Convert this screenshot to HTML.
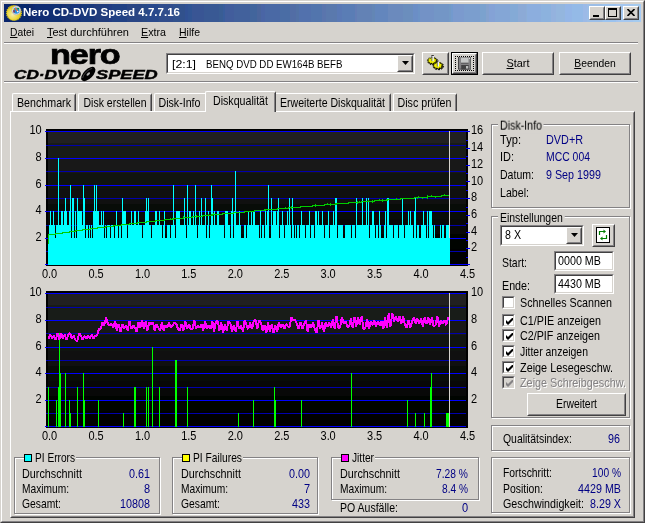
<!DOCTYPE html>
<html><head><meta charset="utf-8"><title>Nero CD-DVD Speed 4.7.7.16</title>
<style>
html,body{margin:0;padding:0;}
body{width:645px;height:523px;overflow:hidden;background:#d6d3ce;position:relative;
 font-family:"Liberation Sans",sans-serif;font-size:11px;color:#000;}
#root{position:absolute;left:0;top:0;width:645px;height:523px;will-change:transform;}
.a{position:absolute;}
.t{position:absolute;white-space:nowrap;line-height:13px;height:13px;}
.nv{color:#000084;}
.win{left:0;top:0;width:645px;height:523px;box-sizing:border-box;
 border:1px solid;border-color:#d6d3ce #424142 #424142 #d6d3ce;}
.win2{left:1px;top:1px;width:643px;height:521px;box-sizing:border-box;
 border:1px solid;border-color:#fff #848284 #848284 #fff;}
.title{left:4px;top:4px;width:637px;height:18px;background:linear-gradient(to right,#0a246a,#a6caf0);}
.btn{box-sizing:border-box;background:#d6d3ce;border:1px solid;border-color:#fff #424142 #424142 #fff;}
.btn:after{content:"";position:absolute;left:0;top:0;right:0;bottom:0;border:1px solid;border-color:#d6d3ce #848284 #848284 #d6d3ce;}
.sunk{box-sizing:border-box;background:#fff;border:1px solid;border-color:#848284 #fff #fff #848284;}
.sunk:after{content:"";position:absolute;left:0;top:0;right:0;bottom:0;border:1px solid;border-color:#424142 #d6d3ce #d6d3ce #424142;}
.sep{height:2px;border-top:1px solid #848284;border-bottom:1px solid #fff;box-sizing:border-box;}
.grp{box-sizing:border-box;border:1px solid #848284;box-shadow:1px 1px 0 #fff, inset 1px 1px 0 #fff;}
.gl{background:#d6d3ce;padding:0 2px;}
.tab{box-sizing:border-box;border-top:1px solid #fff;border-left:1px solid #fff;border-right:1px solid #424142;border-radius:2px 2px 0 0;background:#d6d3ce;}
.tab:after{content:"";position:absolute;right:0;top:1px;bottom:0;width:1px;background:#848284;}
u{text-decoration:underline;}
.cb{width:13px;height:13px;}
.sw{display:inline-block;width:7px;height:7px;border:1px solid #000;margin-right:4px;vertical-align:-1px;}
</style></head>
<body>
<div id="root">
<div class="a win"></div><div class="a win2"></div>
<svg class="a" style="left:4px;top:4px" width="637" height="18" shape-rendering="crispEdges"><rect x="0" y="0" width="16" height="18" fill="#08246b"/><rect x="16" y="0" width="9" height="18" fill="#08286b"/><rect x="25" y="0" width="4" height="18" fill="#10286b"/><rect x="29" y="0" width="2" height="18" fill="#102873"/><rect x="31" y="0" width="15" height="18" fill="#102c73"/><rect x="46" y="0" width="12" height="18" fill="#103073"/><rect x="58" y="0" width="4" height="18" fill="#183073"/><rect x="62" y="0" width="5" height="18" fill="#183473"/><rect x="67" y="0" width="10" height="18" fill="#18347b"/><rect x="77" y="0" width="13" height="18" fill="#18387b"/><rect x="90" y="0" width="2" height="18" fill="#21387b"/><rect x="92" y="0" width="13" height="18" fill="#213c7b"/><rect x="105" y="0" width="3" height="18" fill="#213c84"/><rect x="108" y="0" width="15" height="18" fill="#214184"/><rect x="123" y="0" width="15" height="18" fill="#294584"/><rect x="138" y="0" width="5" height="18" fill="#294984"/><rect x="143" y="0" width="11" height="18" fill="#29498c"/><rect x="154" y="0" width="1" height="18" fill="#294d8c"/><rect x="155" y="0" width="14" height="18" fill="#314d8c"/><rect x="169" y="0" width="12" height="18" fill="#31518c"/><rect x="181" y="0" width="3" height="18" fill="#315194"/><rect x="184" y="0" width="4" height="18" fill="#315594"/><rect x="188" y="0" width="12" height="18" fill="#395594"/><rect x="200" y="0" width="15" height="18" fill="#395994"/><rect x="215" y="0" width="4" height="18" fill="#395d94"/><rect x="219" y="0" width="2" height="18" fill="#395d9c"/><rect x="221" y="0" width="9" height="18" fill="#425d9c"/><rect x="230" y="0" width="16" height="18" fill="#42619c"/><rect x="246" y="0" width="7" height="18" fill="#42659c"/><rect x="253" y="0" width="4" height="18" fill="#4a659c"/><rect x="257" y="0" width="4" height="18" fill="#4a65a5"/><rect x="261" y="0" width="15" height="18" fill="#4a69a5"/><rect x="276" y="0" width="10" height="18" fill="#4a6da5"/><rect x="286" y="0" width="6" height="18" fill="#526da5"/><rect x="292" y="0" width="3" height="18" fill="#5271a5"/><rect x="295" y="0" width="12" height="18" fill="#5271ad"/><rect x="307" y="0" width="11" height="18" fill="#5275ad"/><rect x="318" y="0" width="4" height="18" fill="#5a75ad"/><rect x="322" y="0" width="11" height="18" fill="#5a79ad"/><rect x="333" y="0" width="5" height="18" fill="#5a79b5"/><rect x="338" y="0" width="13" height="18" fill="#5a7db5"/><rect x="351" y="0" width="2" height="18" fill="#637db5"/><rect x="353" y="0" width="15" height="18" fill="#6382b5"/><rect x="368" y="0" width="3" height="18" fill="#6386b5"/><rect x="371" y="0" width="13" height="18" fill="#6386bd"/><rect x="384" y="0" width="15" height="18" fill="#6b8abd"/><rect x="399" y="0" width="10" height="18" fill="#6b8ebd"/><rect x="409" y="0" width="5" height="18" fill="#6b8ec6"/><rect x="414" y="0" width="2" height="18" fill="#6b92c6"/><rect x="416" y="0" width="14" height="18" fill="#7392c6"/><rect x="430" y="0" width="15" height="18" fill="#7396c6"/><rect x="445" y="0" width="2" height="18" fill="#739ac6"/><rect x="447" y="0" width="2" height="18" fill="#739ace"/><rect x="449" y="0" width="11" height="18" fill="#7b9ace"/><rect x="460" y="0" width="16" height="18" fill="#7b9ece"/><rect x="476" y="0" width="6" height="18" fill="#7ba2ce"/><rect x="482" y="0" width="3" height="18" fill="#84a2ce"/><rect x="485" y="0" width="6" height="18" fill="#84a2d6"/><rect x="491" y="0" width="15" height="18" fill="#84a6d6"/><rect x="506" y="0" width="8" height="18" fill="#84aad6"/><rect x="514" y="0" width="8" height="18" fill="#8caad6"/><rect x="522" y="0" width="1" height="18" fill="#8caed6"/><rect x="523" y="0" width="14" height="18" fill="#8caede"/><rect x="537" y="0" width="10" height="18" fill="#8cb2de"/><rect x="547" y="0" width="5" height="18" fill="#94b2de"/><rect x="552" y="0" width="9" height="18" fill="#94b6de"/><rect x="561" y="0" width="7" height="18" fill="#94b6e7"/><rect x="568" y="0" width="11" height="18" fill="#94bae7"/><rect x="579" y="0" width="4" height="18" fill="#9cbae7"/><rect x="583" y="0" width="15" height="18" fill="#9cbee7"/><rect x="598" y="0" width="1" height="18" fill="#9cc3e7"/><rect x="599" y="0" width="13" height="18" fill="#9cc3ef"/><rect x="612" y="0" width="2" height="18" fill="#a5c3ef"/><rect x="614" y="0" width="15" height="18" fill="#a5c7ef"/><rect x="629" y="0" width="7" height="18" fill="#a5cbef"/><rect x="636" y="0" width="1" height="18" fill="#a5cbf7"/></svg>
<div class="t" id="ttl" style="left:23px;top:6px;transform:scale(1.048,1);transform-origin:0 10.3px;color:#fff;font-weight:bold;">Nero CD-DVD Speed 4.7.7.16</div>
<svg class="a" style="left:5px;top:4px" width="18" height="18" viewBox="5 4 18 18">
<defs><radialGradient id="gd" cx="0.4" cy="0.6" r="0.6"><stop offset="0" stop-color="#f4ecb0"/><stop offset="0.6" stop-color="#ecd840"/><stop offset="1" stop-color="#d8c010"/></radialGradient></defs>
<circle cx="14" cy="13" r="7.4" fill="url(#gd)" stroke="#d8c418" stroke-width="1.2" stroke-dasharray="1.2 0.8"/>
<circle cx="16.3" cy="10.4" r="4.4" fill="#e4e4ec" stroke="#a8a8b8" stroke-width="0.6"/>
<circle cx="16.3" cy="10.6" r="3.2" fill="#2090e0"/>
<path d="M13.4 10.2v2.2h1.2v-2.2z" fill="#c01010"/><path d="M17.3 7.9h1.8v1.4h-1.8z" fill="#209020"/><circle cx="13.5" cy="9.4" r="0.6" fill="#f8e000"/>
<path d="M15.1 7.8L17.8 11.6" stroke="#f07030" stroke-width="1.3"/><circle cx="17.8" cy="11.6" r="0.8" fill="#fff"/></svg>
<div class="a btn" style="left:589px;top:6px;width:16px;height:14px;"><div class="a" style="left:3px;top:8px;width:6px;height:2px;background:#000"></div></div><div class="a btn" style="left:605px;top:6px;width:16px;height:14px;"><div class="a" style="left:2px;top:1px;width:9px;height:9px;box-sizing:border-box;border:1px solid #000;border-top-width:2px"></div></div><div class="a btn" style="left:623px;top:6px;width:16px;height:14px;"><svg class="a" style="left:3px;top:2px" width="8" height="7" viewBox="0 0 8 7"><path d="M0.5 0 L7.5 7 M7.5 0 L0.5 7" stroke="#000" stroke-width="1.6" fill="none"/></svg></div>
<div class="t" style="left:10px;top:26px;transform:scale(0.934,1);transform-origin:0 10.3px;"><u>D</u>atei</div>
<div class="t" style="left:47px;top:26px;transform:scale(1.000,1);transform-origin:0 10.3px;"><u>T</u>est durchführen</div>
<div class="t" style="left:141px;top:26px;transform:scale(0.973,1);transform-origin:0 10.3px;"><u>E</u>xtra</div>
<div class="t" style="left:179px;top:26px;transform:scale(0.955,1);transform-origin:0 10.3px;"><u>H</u>ilfe</div>
<div class="a sep" style="left:4px;top:42px;width:634px;"></div>
<div class="a sep" style="left:4px;top:81px;width:634px;"></div>
<div class="t" id="lg1" style="left:50px;top:38.7px;font-size:30px;line-height:30px;height:30px;font-weight:bold;letter-spacing:-1px;-webkit-text-stroke:0.8px #000;transform-origin:0 25px;transform:scale(1.14,0.93);">nero</div>
<div class="t" id="lg2" style="left:13.5px;top:66px;font-size:14px;line-height:16px;height:16px;font-weight:bold;font-style:italic;-webkit-text-stroke:0.5px #000;transform-origin:0 12px;transform:scale(1.23,0.96);">CD·DVD</div>
<div class="t" id="lg3" style="left:96px;top:66px;font-size:14px;line-height:16px;height:16px;font-weight:bold;font-style:italic;-webkit-text-stroke:0.5px #000;transform-origin:0 12px;transform:scale(1.3,0.96);">SPEED</div>
<svg class="a" style="left:78px;top:64px" width="20" height="20" viewBox="78 64 20 20"><g transform="rotate(-45 88.3 74)"><ellipse cx="88.3" cy="74" rx="9" ry="4.6" fill="#000"/><ellipse cx="88.3" cy="74" rx="2.2" ry="1.1" fill="#b0b0b0"/><path d="M81.5 72.8 A7.5 3 0 0 1 95 72.8" stroke="#555" stroke-width="0.7" fill="none"/></g></svg>
<div class="a sunk" style="left:166px;top:53px;width:249px;height:21px;"></div>
<div class="t" id="cbt" style="left:172px;top:57.6px;transform:scale(1.120,1);transform-origin:0 10.3px;">[2:1]</div>
<div class="t" style="left:206px;top:57.6px;transform:scale(0.882,1);transform-origin:0 10.3px;">BENQ DVD DD EW164B BEFB</div>
<div class="a btn" style="left:397px;top:55px;width:16px;height:17px;"><svg class="a" style="left:4px;top:5px" width="7" height="4"><path d="M0 0H7L3.5 4Z" fill="#000"/></svg></div>
<div class="a btn" style="left:422px;top:52px;width:27px;height:23px;"></div>
<svg class="a" style="left:424px;top:53px" width="24" height="21" viewBox="424 53 24 21">
<path d="M436.6 61.3L437.8 61.6L437.6 62.3L436.3 62.3L435.9 62.9L436.6 63.6L435.9 64.1L434.8 63.5L434.0 63.8L433.9 64.7L433.0 64.8L432.6 64.0L431.6 63.8L430.8 64.5L430.0 64.2L430.4 63.3L429.7 62.9L428.5 63.1L428.1 62.5L429.1 62.0L429.0 61.3L427.8 61.0L428.0 60.3L429.3 60.3L429.7 59.7L429.0 59.0L429.7 58.5L430.8 59.1L431.6 58.8L431.7 57.9L432.6 57.8L433.0 58.6L434.0 58.8L434.8 58.1L435.6 58.4L435.2 59.3L435.9 59.7L437.1 59.5L437.5 60.1L436.5 60.6ZM442.3 66.2L443.6 66.5L443.4 67.2L442.0 67.2L441.6 67.8L442.3 68.6L441.6 69.1L440.5 68.5L439.6 68.8L439.5 69.8L438.6 69.8L438.2 68.9L437.2 68.8L436.3 69.5L435.5 69.2L435.9 68.3L435.2 67.8L433.9 68.1L433.5 67.4L434.6 66.9L434.5 66.2L433.2 65.9L433.4 65.2L434.8 65.2L435.2 64.6L434.5 63.8L435.2 63.3L436.3 63.9L437.2 63.6L437.3 62.6L438.2 62.6L438.6 63.5L439.6 63.6L440.5 62.9L441.3 63.2L440.9 64.1L441.6 64.6L442.9 64.3L443.3 65.0L442.2 65.5Z" fill="#000" stroke="#000" stroke-width="0.8"/><path d="M436.0 60.6L437.2 60.9L437.0 61.6L435.7 61.6L435.3 62.2L436.0 62.9L435.3 63.4L434.2 62.8L433.4 63.1L433.3 64.0L432.4 64.1L432.0 63.3L431.0 63.1L430.2 63.8L429.4 63.5L429.8 62.6L429.1 62.2L427.9 62.4L427.5 61.8L428.5 61.3L428.4 60.6L427.2 60.3L427.4 59.6L428.7 59.6L429.1 59.0L428.4 58.3L429.1 57.8L430.2 58.4L431.0 58.1L431.1 57.2L432.0 57.1L432.4 57.9L433.4 58.1L434.2 57.4L435.0 57.7L434.6 58.6L435.3 59.0L436.5 58.8L436.9 59.4L435.9 59.9ZM441.7 65.5L443.0 65.8L442.8 66.5L441.4 66.5L441.0 67.1L441.7 67.9L441.0 68.4L439.9 67.8L439.0 68.1L438.9 69.1L438.0 69.1L437.6 68.2L436.6 68.1L435.7 68.8L434.9 68.5L435.3 67.6L434.6 67.1L433.3 67.4L432.9 66.7L434.0 66.2L433.9 65.5L432.6 65.2L432.8 64.5L434.2 64.5L434.6 63.9L433.9 63.1L434.6 62.6L435.7 63.2L436.6 62.9L436.7 61.9L437.6 61.9L438.0 62.8L439.0 62.9L439.9 62.2L440.7 62.5L440.3 63.4L441.0 63.9L442.3 63.6L442.7 64.3L441.6 64.8Z" fill="#f0f000" stroke="#000" stroke-width="0.5" stroke-linejoin="round"/>
<path d="M431.4 55.2h2.4v0.8h-2.4zM436.8 60.8h2.2v0.8h-2.2z" fill="#000"/>
<path d="M431.4 56h1.1v5.2h-1.1zM436.8 61.6h1v4.8h-1z" fill="#636563"/><path d="M432.5 56h1.3v5.2h-1.3zM437.8 61.6h1.2v4.8h-1.2z" fill="#f0f0ff"/></svg>
<div class="a" style="left:451px;top:52px;width:27px;height:23px;background:#000"></div><div class="a btn" style="left:452px;top:53px;width:25px;height:21px;"></div>
<div class="a" style="left:455px;top:56px;width:19px;height:15px;box-sizing:border-box;border:1px dotted #000"></div>
<svg class="a" style="left:458px;top:57px" width="13" height="13" viewBox="0 0 13 13"><rect x="0" y="0" width="13" height="12.5" fill="#848284"/><rect x="0" y="0" width="1" height="12.5" fill="#424142"/><rect x="1" y="11.7" width="12" height="0.8" fill="#424142"/><rect x="3" y="0.8" width="7.5" height="5" fill="#c6c7c6"/><rect x="3" y="5.8" width="7.5" height="0.7" fill="#424142"/><rect x="3.2" y="8" width="7.5" height="4.5" fill="#424142"/><rect x="8" y="9" width="2.2" height="2.6" fill="#bdbebd"/><rect x="11.2" y="1" width="1" height="1" fill="#f0f0f0"/><rect x="12" y="0" width="1" height="12.5" fill="#636563"/></svg>
<div class="a btn" style="left:482px;top:52px;width:72px;height:23px;"></div><div class="t" style="left:482px;top:57px;width:72px;text-align:center;transform:scale(0.989,1);transform-origin:50% 10.3px;"><u>S</u>tart</div>
<div class="a btn" style="left:559px;top:52px;width:72px;height:23px;"></div><div class="t" style="left:559px;top:57px;width:72px;text-align:center;transform:scale(0.941,1);transform-origin:50% 10.3px;"><u>B</u>eenden</div>
<div class="a" style="left:10px;top:111px;width:625px;height:407px;box-sizing:border-box;border:1px solid;border-color:#fff #424142 #424142 #fff;"></div>
<div class="a" style="left:11px;top:112px;width:623px;height:405px;box-sizing:border-box;border:1px solid;border-color:#d6d3ce #848284 #848284 #d6d3ce;"></div>
<div class="a tab" style="left:12px;top:93px;width:64px;height:18px;"></div>
<div class="t" style="left:12px;top:97px;width:64px;text-align:center;transform:scale(0.970,1.13);transform-origin:50% 10.3px;">Benchmark</div>
<div class="a tab" style="left:78px;top:93px;width:74px;height:18px;"></div>
<div class="t" style="left:78px;top:97px;width:74px;text-align:center;transform:scale(0.954,1.13);transform-origin:50% 10.3px;">Disk erstellen</div>
<div class="a tab" style="left:154px;top:93px;width:54px;height:18px;"></div>
<div class="t" style="left:154px;top:97px;width:51px;text-align:center;transform:scale(0.968,1.13);transform-origin:50% 10.3px;">Disk-Info</div>
<div class="a tab" style="left:274px;top:93px;width:117px;height:18px;"></div>
<div class="t" style="left:276px;top:97px;width:113px;text-align:center;transform:scale(0.959,1.13);transform-origin:50% 10.3px;">Erweiterte Diskqualität</div>
<div class="a tab" style="left:393px;top:93px;width:64px;height:18px;"></div>
<div class="t" style="left:393px;top:97px;width:63px;text-align:center;transform:scale(0.970,1.13);transform-origin:50% 10.3px;">Disc prüfen</div>
<div class="a tab" style="left:205px;top:91px;width:71px;height:21px;"></div>
<div class="t" style="left:205px;top:95px;width:71px;text-align:center;transform:scale(0.967,1.13);transform-origin:50% 10.3px;">Diskqualität</div>
<svg class="a" style="left:0;top:0" width="645" height="523" viewBox="0 0 645 523" font-family="Liberation Sans, sans-serif" font-size="11" shape-rendering="crispEdges"><defs><linearGradient id="cg" x1="0" y1="0" x2="0" y2="1"><stop offset="0" stop-color="#242524"/><stop offset="0.5" stop-color="#121412"/><stop offset="1" stop-color="#000"/></linearGradient></defs><rect x="46" y="129" width="422" height="137" fill="#000"/><rect x="48" y="131" width="418" height="12" fill="#212021"/><rect x="48" y="143" width="418" height="15" fill="#181c18"/><rect x="48" y="158" width="418" height="15" fill="#181818"/><rect x="48" y="173" width="418" height="16" fill="#101410"/><rect x="48" y="189" width="418" height="15" fill="#101010"/><rect x="48" y="204" width="418" height="15" fill="#080c08"/><rect x="48" y="219" width="418" height="15" fill="#080808"/><rect x="48" y="234" width="418" height="15" fill="#000400"/><rect x="48" y="249" width="418" height="15" fill="#000000"/><rect x="46" y="291" width="422" height="137" fill="#000"/><rect x="48" y="293" width="418" height="12" fill="#212021"/><rect x="48" y="305" width="418" height="15" fill="#181c18"/><rect x="48" y="320" width="418" height="15" fill="#181818"/><rect x="48" y="335" width="418" height="16" fill="#101410"/><rect x="48" y="351" width="418" height="15" fill="#101010"/><rect x="48" y="366" width="418" height="15" fill="#080c08"/><rect x="48" y="381" width="418" height="15" fill="#080808"/><rect x="48" y="396" width="418" height="15" fill="#000400"/><rect x="48" y="411" width="418" height="15" fill="#000000"/><rect x="45" y="264" width="421" height="1" fill="#0000ff"/><rect x="46" y="251" width="420" height="1" fill="#0000ad"/><rect x="45" y="238" width="421" height="1" fill="#0000ff"/><rect x="46" y="225" width="420" height="1" fill="#0000ad"/><rect x="45" y="211" width="421" height="1" fill="#0000ff"/><rect x="46" y="198" width="420" height="1" fill="#0000ad"/><rect x="45" y="185" width="421" height="1" fill="#0000ff"/><rect x="46" y="171" width="420" height="1" fill="#0000ad"/><rect x="45" y="158" width="421" height="1" fill="#0000ff"/><rect x="46" y="145" width="420" height="1" fill="#0000ad"/><rect x="45" y="131" width="421" height="1" fill="#0000ff"/><rect x="45" y="426" width="421" height="1" fill="#0000ff"/><rect x="46" y="413" width="420" height="1" fill="#0000ad"/><rect x="45" y="400" width="421" height="1" fill="#0000ff"/><rect x="46" y="387" width="420" height="1" fill="#0000ad"/><rect x="45" y="373" width="421" height="1" fill="#0000ff"/><rect x="46" y="360" width="420" height="1" fill="#0000ad"/><rect x="45" y="347" width="421" height="1" fill="#0000ff"/><rect x="46" y="333" width="420" height="1" fill="#0000ad"/><rect x="45" y="320" width="421" height="1" fill="#0000ff"/><rect x="46" y="307" width="420" height="1" fill="#0000ad"/><rect x="45" y="293" width="421" height="1" fill="#0000ff"/><path d="M48 265V238H49V265ZM49 265V225H50V265ZM50 265V211H51V265ZM51 265V225H53V265ZM53 265V211H54V265ZM54 265V225H55V265ZM55 265V238H56V265ZM56 265V225H58V265ZM58 265V158H59V265ZM59 265V225H61V265ZM61 265V211H63V265ZM63 265V225H64V265ZM64 265V211H65V265ZM65 265V198H66V265ZM66 265V211H67V265ZM67 265V225H69V265ZM69 265V211H70V265ZM70 265V185H71V265ZM71 265V238H72V265ZM72 265V198H74V265ZM74 265V238H75V265ZM75 265V211H76V265ZM76 265V238H77V265ZM77 265V198H78V265ZM78 265V211H82V265ZM82 265V225H83V265ZM83 265V185H84V265ZM84 265V198H85V265ZM85 265V238H86V265ZM86 265V225H88V265ZM88 265V238H89V265ZM89 265V225H90V265ZM90 265V238H91V265ZM91 265V225H92V265ZM92 265V238H93V265ZM93 265V211H94V265ZM94 265V185H95V265ZM95 265V211H96V265ZM96 265V185H97V265ZM97 265V211H99V265ZM99 265V225H101V265ZM101 265V211H102V265ZM102 265V225H103V265ZM103 265V211H104V265ZM104 265V238H105V265ZM105 265V225H106V265ZM106 265V238H107V265ZM107 265V225H110V265ZM110 265V238H111V265ZM111 265V225H114V265ZM114 265V238H115V265ZM115 265V225H116V265ZM116 265V211H117V265ZM117 265V225H118V265ZM118 265V238H119V265ZM119 265V225H121V265ZM121 265V238H122V265ZM122 265V198H123V265ZM123 265V211H126V265ZM126 265V225H127V265ZM127 265V238H128V265ZM128 265V225H131V265ZM131 265V211H132V265ZM132 265V225H134V265ZM134 265V211H136V265ZM136 265V225H138V265ZM138 265V211H139V265ZM139 265V225H142V265ZM142 265V238H143V265ZM143 265V225H145V265ZM145 265V211H146V265ZM146 265V198H147V265ZM147 265V211H148V265ZM148 265V198H149V265ZM149 265V225H151V265ZM151 265V238H152V265ZM152 265V225H155V265ZM155 265V211H157V265ZM157 265V225H159V265ZM159 265V211H160V265ZM160 265V225H162V265ZM162 265V238H163V265ZM163 265V225H164V265ZM164 265V211H165V265ZM165 265V238H167V265ZM167 265V225H170V265ZM170 265V238H171V265ZM171 265V225H173V265ZM173 265V185H174V265ZM174 265V225H175V265ZM175 265V238H176V265ZM176 265V211H180V265ZM180 265V225H184V265ZM184 265V198H185V265ZM185 265V225H186V265ZM186 265V238H187V265ZM187 265V185H188V265ZM188 265V225H189V265ZM189 265V211H191V265ZM191 265V225H193V265ZM193 265V211H194V265ZM194 265V225H195V265ZM195 265V185H196V265ZM196 265V225H197V265ZM197 265V238H198V265ZM198 265V225H199V265ZM199 265V211H200V265ZM200 265V225H201V265ZM201 265V198H202V265ZM202 265V225H205V265ZM205 265V198H206V265ZM206 265V238H207V265ZM207 265V225H208V265ZM208 265V211H209V265ZM209 265V238H210V265ZM210 265V225H211V265ZM211 265V185H212V265ZM212 265V198H213V265ZM213 265V225H214V265ZM214 265V211H215V265ZM215 265V225H217V265ZM217 265V211H219V265ZM219 265V225H224V265ZM224 265V238H225V265ZM225 265V211H228V265ZM228 265V225H230V265ZM230 265V238H231V265ZM231 265V211H232V265ZM232 265V198H233V265ZM233 265V238H234V265ZM234 265V211H235V265ZM235 265V171H236V265ZM236 265V225H239V265ZM239 265V211H240V265ZM240 265V225H241V265ZM241 265V238H244V265ZM244 265V225H246V265ZM246 265V238H247V265ZM247 265V225H248V265ZM248 265V211H249V265ZM249 265V225H251V265ZM251 265V211H252V265ZM252 265V225H253V265ZM253 265V211H255V265ZM255 265V225H259V265ZM259 265V238H260V265ZM260 265V211H261V265ZM261 265V238H262V265ZM262 265V225H264V265ZM264 265V238H265V265ZM265 265V211H266V265ZM266 265V225H267V265ZM267 265V211H268V265ZM268 265V185H269V265ZM269 265V238H271V265ZM271 265V198H272V265ZM272 265V225H273V265ZM273 265V211H276V265ZM276 265V225H277V265ZM277 265V211H278V265ZM278 265V198H279V265ZM279 265V238H280V265ZM280 265V225H282V265ZM282 265V211H283V265ZM283 265V225H284V265ZM284 265V238H285V265ZM285 265V225H287V265ZM287 265V211H288V265ZM288 265V225H289V265ZM289 265V198H290V265ZM290 265V225H291V265ZM291 265V238H292V265ZM292 265V198H293V265ZM293 265V225H294V265ZM294 265V238H295V265ZM295 265V225H296V265ZM296 265V238H297V265ZM297 265V225H299V265ZM299 265V238H300V265ZM300 265V225H301V265ZM301 265V211H302V265ZM302 265V225H305V265ZM305 265V238H306V265ZM306 265V225H309V265ZM309 265V211H310V265ZM310 265V238H311V265ZM311 265V225H314V265ZM314 265V238H315V265ZM315 265V211H317V265ZM317 265V225H318V265ZM318 265V211H319V265ZM319 265V225H322V265ZM322 265V211H323V265ZM323 265V225H324V265ZM324 265V238H325V265ZM325 265V225H328V265ZM328 265V211H329V265ZM329 265V238H330V265ZM330 265V225H333V265ZM333 265V211H334V265ZM334 265V225H335V265ZM335 265V198H337V265ZM337 265V238H338V265ZM338 265V225H343V265ZM343 265V238H345V265ZM345 265V225H351V265ZM351 265V238H352V265ZM352 265V225H355V265ZM355 265V238H356V265ZM356 265V198H357V265ZM357 265V225H362V265ZM362 265V198H363V265ZM363 265V225H366V265ZM366 265V198H367V265ZM367 265V225H368V265ZM368 265V198H369V265ZM369 265V238H370V265ZM370 265V225H372V265ZM372 265V211H374V265ZM374 265V225H375V265ZM375 265V238H376V265ZM376 265V225H378V265ZM378 265V238H379V265ZM379 265V211H380V265ZM380 265V225H381V265ZM381 265V238H384V265ZM384 265V225H385V265ZM385 265V211H386V265ZM386 265V238H387V265ZM387 265V198H389V265ZM389 265V225H393V265ZM393 265V238H394V265ZM394 265V225H398V265ZM398 265V238H399V265ZM399 265V225H402V265ZM402 265V198H403V265ZM403 265V225H404V265ZM404 265V238H405V265ZM405 265V225H408V265ZM408 265V211H409V265ZM409 265V225H410V265ZM410 265V211H411V265ZM411 265V225H413V265ZM413 265V238H414V265ZM414 265V211H415V265ZM415 265V198H416V265ZM416 265V238H417V265ZM417 265V225H419V265ZM419 265V238H421V265ZM421 265V225H423V265ZM423 265V211H424V265ZM424 265V225H426V265ZM426 265V238H427V265ZM427 265V211H428V265ZM428 265V238H429V265ZM429 265V211H432V265ZM432 265V225H433V265ZM433 265V238H434V265ZM434 265V225H435V265ZM435 265V238H440V265ZM440 265V225H441V265ZM441 265V238H442V265ZM442 265V225H444V265ZM444 265V238H446V265ZM446 265V225H450V265Z" fill="#00ffff"/><rect x="466" y="264" width="4" height="1" fill="#0000ff"/><rect x="466" y="257" width="2" height="1" fill="#0000ff"/><rect x="466" y="248" width="4" height="1" fill="#0000ff"/><rect x="466" y="240" width="2" height="1" fill="#0000ff"/><rect x="466" y="232" width="4" height="1" fill="#0000ff"/><rect x="466" y="223" width="2" height="1" fill="#0000ff"/><rect x="466" y="215" width="4" height="1" fill="#0000ff"/><rect x="466" y="207" width="2" height="1" fill="#0000ff"/><rect x="466" y="198" width="4" height="1" fill="#0000ff"/><rect x="466" y="190" width="2" height="1" fill="#0000ff"/><rect x="466" y="181" width="4" height="1" fill="#0000ff"/><rect x="466" y="173" width="2" height="1" fill="#0000ff"/><rect x="466" y="165" width="4" height="1" fill="#0000ff"/><rect x="466" y="156" width="2" height="1" fill="#0000ff"/><rect x="466" y="148" width="4" height="1" fill="#0000ff"/><rect x="466" y="140" width="2" height="1" fill="#0000ff"/><rect x="466" y="131" width="4" height="1" fill="#0000ff"/><path d="M48 234h1v10h-1zM49 234h1V235h-1zM50 234h1V235h-1zM51 234h1V235h-1zM52 234h1V235h-1zM53 234h1V235h-1zM54 234h1V235h-1zM55 233h1V235h-1zM56 233h1V234h-1zM57 233h1V234h-1zM58 233h1V234h-1zM59 233h1V234h-1zM60 233h1V234h-1zM61 233h1V234h-1zM62 232h1V234h-1zM63 232h1V233h-1zM64 232h1V233h-1zM65 232h1V233h-1zM66 232h1V233h-1zM67 232h1V233h-1zM68 232h1V233h-1zM69 231h1V233h-1zM70 231h1V232h-1zM71 231h1V232h-1zM72 231h1V232h-1zM73 231h1V232h-1zM74 231h1V232h-1zM75 230h1V232h-1zM76 230h1V231h-1zM77 230h1V231h-1zM78 230h1V231h-1zM79 230h1V231h-1zM80 230h1V231h-1zM81 230h1V231h-1zM82 229h1V231h-1zM83 229h1V230h-1zM84 229h1V230h-1zM85 229h1V230h-1zM86 229h1V230h-1zM87 229h1V230h-1zM88 229h1V230h-1zM89 229h1V230h-1zM90 228h1V230h-1zM91 228h1V229h-1zM92 228h1V229h-1zM93 228h1V229h-1zM94 228h1V229h-1zM95 228h1V229h-1zM96 228h1V229h-1zM97 227h1V229h-1zM98 227h1V228h-1zM99 227h1V228h-1zM100 227h1V228h-1zM101 227h1V228h-1zM102 227h1V228h-1zM103 227h1V228h-1zM104 227h1V228h-1zM105 226h1V228h-1zM106 226h1V227h-1zM107 226h1V227h-1zM108 226h1V227h-1zM109 226h1V227h-1zM110 226h1V227h-1zM111 226h1V227h-1zM112 226h1V227h-1zM113 225h1V227h-1zM114 225h1V226h-1zM115 225h1V226h-1zM116 225h1V226h-1zM117 225h1V226h-1zM118 225h1V226h-1zM119 225h1V226h-1zM120 225h1V226h-1zM121 224h1V226h-1zM122 224h1V225h-1zM123 224h1V225h-1zM124 224h1V225h-1zM125 224h1V225h-1zM126 224h1V225h-1zM127 224h1V225h-1zM128 224h1V225h-1zM129 223h1V225h-1zM130 223h1V224h-1zM131 223h1V224h-1zM132 223h1V224h-1zM133 223h1V224h-1zM134 223h1V224h-1zM135 223h1V224h-1zM136 223h1V224h-1zM137 222h1V224h-1zM138 222h1V223h-1zM139 222h1V223h-1zM140 222h1V223h-1zM141 222h1V223h-1zM142 222h1V223h-1zM143 222h1V223h-1zM144 222h1V223h-1zM145 222h1V223h-1zM146 221h1V223h-1zM147 221h1V222h-1zM148 221h1V222h-1zM149 221h1V222h-1zM150 221h1V222h-1zM151 221h1V222h-1zM152 221h1V222h-1zM153 221h1V222h-1zM154 221h1V222h-1zM155 220h1V222h-1zM156 220h1V221h-1zM157 220h1V221h-1zM158 220h1V221h-1zM159 220h1V221h-1zM160 220h1V221h-1zM161 220h1V221h-1zM162 220h1V221h-1zM163 220h1V221h-1zM164 219h1V221h-1zM165 219h1V220h-1zM166 219h1V220h-1zM167 219h1V220h-1zM168 219h1V220h-1zM169 219h1V220h-1zM170 218h1V220h-1zM171 219h1V220h-1zM172 218h1V220h-1zM173 218h1V220h-1zM174 218h1V219h-1zM175 218h1V219h-1zM176 218h1V219h-1zM177 218h1V219h-1zM178 218h1V219h-1zM179 218h1V219h-1zM180 218h1V219h-1zM181 218h1V219h-1zM182 218h1V219h-1zM183 216h1V219h-1zM184 217h1V218h-1zM185 217h1V218h-1zM186 217h1V218h-1zM187 217h1V218h-1zM188 217h1V218h-1zM189 217h1V218h-1zM190 217h1V218h-1zM191 217h1V218h-1zM192 216h1V218h-1zM193 216h1V217h-1zM194 216h1V217h-1zM195 216h1V217h-1zM196 215h1V218h-1zM197 216h1V217h-1zM198 216h1V217h-1zM199 216h1V217h-1zM200 216h1V217h-1zM201 216h1V217h-1zM202 215h1V217h-1zM203 215h1V216h-1zM204 215h1V216h-1zM205 215h1V216h-1zM206 215h1V216h-1zM207 215h1V216h-1zM208 214h1V216h-1zM209 215h1V216h-1zM210 215h1V216h-1zM211 214h1V216h-1zM212 214h1V216h-1zM213 213h1V215h-1zM214 214h1V215h-1zM215 214h1V215h-1zM216 214h1V215h-1zM217 214h1V215h-1zM218 214h1V215h-1zM219 214h1V215h-1zM220 214h1V215h-1zM221 214h1V215h-1zM222 213h1V215h-1zM223 213h1V214h-1zM224 213h1V214h-1zM225 213h1V214h-1zM226 213h1V214h-1zM227 213h1V214h-1zM228 213h1V214h-1zM229 213h1V214h-1zM230 213h1V214h-1zM231 213h1V214h-1zM232 213h1V214h-1zM233 212h1V214h-1zM234 212h1V213h-1zM235 212h1V213h-1zM236 212h1V213h-1zM237 212h1V213h-1zM238 212h1V213h-1zM239 212h1V213h-1zM240 212h1V213h-1zM241 212h1V213h-1zM242 212h1V213h-1zM243 212h1V213h-1zM244 211h1V213h-1zM245 211h1V212h-1zM246 211h1V212h-1zM247 211h1V212h-1zM248 211h1V212h-1zM249 211h1V212h-1zM250 211h1V212h-1zM251 211h1V212h-1zM252 211h1V212h-1zM253 211h1V212h-1zM254 210h1V212h-1zM255 210h1V211h-1zM256 210h1V211h-1zM257 210h1V211h-1zM258 210h1V211h-1zM259 210h1V211h-1zM260 210h1V211h-1zM261 210h1V211h-1zM262 210h1V211h-1zM263 210h1V211h-1zM264 209h1V211h-1zM265 209h1V211h-1zM266 209h1V210h-1zM267 209h1V210h-1zM268 209h1V210h-1zM269 209h1V210h-1zM270 209h1V210h-1zM271 209h1V210h-1zM272 209h1V210h-1zM273 209h1V210h-1zM274 209h1V210h-1zM275 209h1V210h-1zM276 209h1V210h-1zM277 208h1V210h-1zM278 208h1V209h-1zM279 208h1V209h-1zM280 208h1V209h-1zM281 208h1V209h-1zM282 208h1V209h-1zM283 208h1V209h-1zM284 208h1V209h-1zM285 207h1V209h-1zM286 208h1V209h-1zM287 208h1V209h-1zM288 207h1V209h-1zM289 207h1V208h-1zM290 207h1V208h-1zM291 206h1V209h-1zM292 207h1V208h-1zM293 207h1V208h-1zM294 207h1V208h-1zM295 207h1V208h-1zM296 207h1V208h-1zM297 207h1V208h-1zM298 207h1V208h-1zM299 207h1V208h-1zM300 206h1V208h-1zM301 206h1V207h-1zM302 206h1V207h-1zM303 206h1V207h-1zM304 206h1V207h-1zM305 206h1V207h-1zM306 206h1V207h-1zM307 206h1V207h-1zM308 206h1V207h-1zM309 206h1V207h-1zM310 206h1V207h-1zM311 206h1V207h-1zM312 205h1V207h-1zM313 205h1V206h-1zM314 205h1V206h-1zM315 204h1V207h-1zM316 205h1V206h-1zM317 205h1V206h-1zM318 205h1V206h-1zM319 205h1V206h-1zM320 205h1V206h-1zM321 205h1V206h-1zM322 205h1V206h-1zM323 205h1V206h-1zM324 204h1V206h-1zM325 204h1V205h-1zM326 204h1V205h-1zM327 203h1V205h-1zM328 204h1V205h-1zM329 204h1V205h-1zM330 203h1V206h-1zM331 204h1V205h-1zM332 204h1V205h-1zM333 204h1V205h-1zM334 204h1V205h-1zM335 203h1V205h-1zM336 203h1V205h-1zM337 203h1V204h-1zM338 203h1V204h-1zM339 203h1V204h-1zM340 203h1V204h-1zM341 203h1V204h-1zM342 203h1V204h-1zM343 203h1V204h-1zM344 203h1V204h-1zM345 203h1V204h-1zM346 203h1V204h-1zM347 203h1V204h-1zM348 202h1V204h-1zM349 202h1V203h-1zM350 202h1V203h-1zM351 202h1V203h-1zM352 202h1V203h-1zM353 202h1V203h-1zM354 202h1V203h-1zM355 202h1V203h-1zM356 202h1V203h-1zM357 201h1V204h-1zM358 202h1V203h-1zM359 201h1V203h-1zM360 202h1V203h-1zM361 201h1V203h-1zM362 201h1V202h-1zM363 201h1V202h-1zM364 201h1V202h-1zM365 201h1V202h-1zM366 201h1V202h-1zM367 201h1V202h-1zM368 200h1V202h-1zM369 201h1V202h-1zM370 201h1V202h-1zM371 201h1V202h-1zM372 200h1V203h-1zM373 201h1V202h-1zM374 200h1V202h-1zM375 200h1V201h-1zM376 200h1V201h-1zM377 200h1V201h-1zM378 200h1V201h-1zM379 199h1V201h-1zM380 200h1V201h-1zM381 200h1V201h-1zM382 199h1V202h-1zM383 200h1V201h-1zM384 200h1V201h-1zM385 200h1V201h-1zM386 199h1V201h-1zM387 199h1V201h-1zM388 199h1V200h-1zM389 199h1V200h-1zM390 199h1V200h-1zM391 199h1V200h-1zM392 199h1V200h-1zM393 199h1V200h-1zM394 199h1V200h-1zM395 199h1V200h-1zM396 198h1V200h-1zM397 199h1V200h-1zM398 199h1V200h-1zM399 199h1V200h-1zM400 198h1V200h-1zM401 198h1V199h-1zM402 198h1V199h-1zM403 198h1V199h-1zM404 198h1V199h-1zM405 198h1V199h-1zM406 198h1V199h-1zM407 198h1V199h-1zM408 198h1V199h-1zM409 198h1V199h-1zM410 198h1V199h-1zM411 198h1V199h-1zM412 198h1V199h-1zM413 198h1V199h-1zM414 197h1V199h-1zM415 197h1V198h-1zM416 197h1V198h-1zM417 197h1V199h-1zM418 196h1V198h-1zM419 197h1V198h-1zM420 197h1V198h-1zM421 197h1V198h-1zM422 197h1V199h-1zM423 197h1V198h-1zM424 197h1V198h-1zM425 197h1V198h-1zM426 197h1V198h-1zM427 195h1V199h-1zM428 196h1V197h-1zM429 196h1V197h-1zM430 196h1V197h-1zM431 195h1V197h-1zM432 196h1V197h-1zM433 196h1V197h-1zM434 196h1V197h-1zM435 196h1V198h-1zM436 196h1V197h-1zM437 196h1V197h-1zM438 196h1V197h-1zM439 196h1V197h-1zM440 196h1V197h-1zM441 195h1V197h-1zM442 195h1V196h-1zM443 195h1V196h-1zM444 194h1V196h-1zM445 195h1V196h-1zM446 195h1V196h-1zM447 195h1V196h-1zM448 195h1V196h-1zM449 195h1V196h-1z" fill="#00cc00"/><rect x="449" y="131" width="1" height="107" fill="#d6d3ce"/><rect x="449" y="293" width="1" height="134" fill="#d6d3ce"/><path d="M48 427V387h1V427ZM56 427V400h1V427ZM58 427V387h1V427ZM59 427V333h1V427ZM60 427V373h1V427ZM65 427V373h1V427ZM69 427V400h1V427ZM70 427V413h1V427ZM77 427V387h1V427ZM83 427V373h1V427ZM84 427V400h1V427ZM98 427V400h1V427ZM123 427V413h1V427ZM134 427V387h1V427ZM135 427V387h1V427ZM146 427V387h1V427ZM148 427V387h1V427ZM152 427V347h1V427ZM159 427V387h1V427ZM175 427V360h1V427ZM176 427V360h1V427ZM187 427V387h1V427ZM238 427V413h1V427ZM253 427V400h1V427ZM274 427V387h1V427ZM275 427V400h1V427ZM301 427V400h1V427ZM351 427V373h1V427ZM407 427V400h1V427ZM415 427V413h1V427ZM424 427V413h1V427ZM430 427V387h1V427ZM431 427V373h1V427ZM446 427V413h1V427ZM447 427V413h1V427ZM448 427V413h1V427Z" fill="#00ff00"/><polyline fill="none" stroke="#ff00ff" stroke-width="2" stroke-linejoin="bevel" points="48.5,338.6 50.3,334.4 52.1,338.6 53.9,335.8 55.7,340.0 57.5,333.0 59.3,340.0 61.1,333.0 62.9,338.6 64.7,334.4 66.5,340.0 68.3,334.4 70.1,333.0 71.9,338.6 73.7,335.8 75.5,340.0 77.3,341.4 79.1,333.0 80.9,335.8 82.7,340.0 84.5,335.8 86.3,338.6 88.1,335.8 89.9,338.6 91.7,334.4 93.5,338.6 95.3,335.8 97.1,335.8 98.9,329.1 100.7,329.1 102.5,322.6 104.3,325.2 106.1,317.4 107.9,323.9 109.7,325.2 111.5,323.9 113.3,327.8 115.1,321.3 116.9,330.4 118.7,323.9 120.5,331.7 122.3,323.9 124.1,329.1 125.9,325.2 127.7,330.4 129.5,321.3 131.3,329.1 133.1,325.2 134.9,327.8 136.7,331.7 138.5,322.6 140.3,327.8 142.1,320.0 143.9,329.1 145.7,321.3 147.5,330.4 149.3,322.6 151.1,323.9 152.9,322.6 154.7,330.4 156.5,323.9 158.3,327.8 160.1,330.4 161.9,322.6 163.7,330.4 165.5,325.2 167.3,327.8 169.1,322.6 170.9,327.8 172.7,325.2 174.5,322.6 176.3,323.9 178.1,329.1 179.9,330.4 181.7,323.9 183.5,330.4 185.3,321.3 187.1,329.1 188.9,323.9 190.7,329.1 192.5,329.1 194.3,320.0 196.1,329.1 197.9,325.2 199.7,327.8 201.5,323.9 203.3,330.4 205.1,321.3 206.9,329.1 208.7,325.2 210.5,329.1 212.3,321.3 214.1,331.7 215.9,321.3 217.7,321.3 219.5,330.4 221.3,322.6 223.1,333.0 224.9,323.9 226.7,330.4 228.5,321.3 230.3,322.6 232.1,331.7 233.9,325.2 235.7,331.7 237.5,321.3 239.3,329.1 241.1,325.2 242.9,331.7 244.7,320.0 246.5,325.2 248.3,329.1 250.1,322.6 251.9,329.1 253.7,321.3 255.5,320.0 257.3,329.1 259.1,320.0 260.9,322.6 262.7,330.4 264.5,325.2 266.3,333.0 268.1,322.6 269.9,331.7 271.7,323.9 273.5,333.0 275.3,325.2 277.1,331.7 278.9,322.6 280.7,327.8 282.5,323.9 284.3,329.1 286.1,323.9 287.9,326.5 289.7,326.5 291.5,317.4 293.3,320.0 295.1,320.0 296.9,323.9 298.7,329.1 300.5,322.6 302.3,329.1 304.1,323.9 305.9,320.0 307.7,331.7 309.5,323.9 311.3,327.8 313.1,322.6 314.9,329.1 316.7,333.0 318.5,320.0 320.3,329.1 322.1,322.6 323.9,331.7 325.7,322.6 327.5,326.5 329.3,322.6 331.1,327.8 332.9,318.7 334.7,329.1 336.5,316.1 338.3,327.8 340.1,327.8 341.9,317.4 343.7,323.9 345.5,321.3 347.3,326.5 349.1,326.5 350.9,318.7 352.7,327.8 354.5,317.4 356.3,326.5 358.1,317.4 359.9,325.2 361.7,316.1 363.5,329.1 365.3,327.8 367.1,318.7 368.9,329.1 370.7,321.3 372.5,325.2 374.3,320.0 376.1,326.5 377.9,321.3 379.7,325.2 381.5,321.3 383.3,329.1 385.1,317.4 386.9,327.8 388.7,313.5 390.5,326.5 392.3,313.5 394.1,321.3 395.9,316.1 397.7,321.3 399.5,316.1 401.3,323.9 403.1,316.1 404.9,325.2 406.7,327.8 408.5,320.0 410.3,327.8 412.1,321.3 413.9,317.4 415.7,323.9 417.5,318.7 419.3,323.9 421.1,318.7 422.9,326.5 424.7,317.4 426.5,323.9 428.3,317.4 430.1,325.2 431.9,317.4 433.7,326.5 435.5,325.2 437.3,316.1 439.1,326.5 440.9,320.0 442.7,323.9 444.5,320.0 446.3,325.2 448.1,317.4"/><g fill="#000" shape-rendering="auto" letter-spacing="-0.1"><text transform="translate(41.5,241.0) scale(1,1.13)" text-anchor="end">2</text><text transform="translate(41.5,214.0) scale(1,1.13)" text-anchor="end">4</text><text transform="translate(41.5,188.0) scale(1,1.13)" text-anchor="end">6</text><text transform="translate(41.5,161.0) scale(1,1.13)" text-anchor="end">8</text><text transform="translate(41.5,134.0) scale(1,1.13)" text-anchor="end">10</text><text transform="translate(49.5,278.0) scale(1,1.13)" text-anchor="middle">0.0</text><text transform="translate(95.9,278.0) scale(1,1.13)" text-anchor="middle">0.5</text><text transform="translate(142.4,278.0) scale(1,1.13)" text-anchor="middle">1.0</text><text transform="translate(188.8,278.0) scale(1,1.13)" text-anchor="middle">1.5</text><text transform="translate(235.3,278.0) scale(1,1.13)" text-anchor="middle">2.0</text><text transform="translate(281.7,278.0) scale(1,1.13)" text-anchor="middle">2.5</text><text transform="translate(328.1,278.0) scale(1,1.13)" text-anchor="middle">3.0</text><text transform="translate(374.6,278.0) scale(1,1.13)" text-anchor="middle">3.5</text><text transform="translate(421.0,278.0) scale(1,1.13)" text-anchor="middle">4.0</text><text transform="translate(467.5,278.0) scale(1,1.13)" text-anchor="middle">4.5</text><text transform="translate(41.5,403.0) scale(1,1.13)" text-anchor="end">2</text><text transform="translate(41.5,376.0) scale(1,1.13)" text-anchor="end">4</text><text transform="translate(41.5,350.0) scale(1,1.13)" text-anchor="end">6</text><text transform="translate(41.5,323.0) scale(1,1.13)" text-anchor="end">8</text><text transform="translate(41.5,296.0) scale(1,1.13)" text-anchor="end">10</text><text transform="translate(49.5,440.0) scale(1,1.13)" text-anchor="middle">0.0</text><text transform="translate(95.9,440.0) scale(1,1.13)" text-anchor="middle">0.5</text><text transform="translate(142.4,440.0) scale(1,1.13)" text-anchor="middle">1.0</text><text transform="translate(188.8,440.0) scale(1,1.13)" text-anchor="middle">1.5</text><text transform="translate(235.3,440.0) scale(1,1.13)" text-anchor="middle">2.0</text><text transform="translate(281.7,440.0) scale(1,1.13)" text-anchor="middle">2.5</text><text transform="translate(328.1,440.0) scale(1,1.13)" text-anchor="middle">3.0</text><text transform="translate(374.6,440.0) scale(1,1.13)" text-anchor="middle">3.5</text><text transform="translate(421.0,440.0) scale(1,1.13)" text-anchor="middle">4.0</text><text transform="translate(467.5,440.0) scale(1,1.13)" text-anchor="middle">4.5</text><text transform="translate(471,251.3) scale(1,1.13)">2</text><text transform="translate(471,234.6) scale(1,1.13)">4</text><text transform="translate(471,217.9) scale(1,1.13)">6</text><text transform="translate(471,201.2) scale(1,1.13)">8</text><text transform="translate(471,184.5) scale(1,1.13)">10</text><text transform="translate(471,167.7) scale(1,1.13)">12</text><text transform="translate(471,151.0) scale(1,1.13)">14</text><text transform="translate(471,134.3) scale(1,1.13)">16</text><text transform="translate(471,403.0) scale(1,1.13)">2</text><text transform="translate(471,376.0) scale(1,1.13)">4</text><text transform="translate(471,350.0) scale(1,1.13)">6</text><text transform="translate(471,323.0) scale(1,1.13)">8</text><text transform="translate(471,296.0) scale(1,1.13)">10</text></g></svg>
<div class="a grp" style="left:491px;top:124px;width:139px;height:84px;"></div><div class="t gl" style="left:498px;top:120px;transform:scale(0.968,1.13);transform-origin:0 10.3px;">Disk-Info</div>
<div class="t" style="left:500px;top:134px;transform:scale(1.010,1.13);transform-origin:0 10.3px;">Typ:</div>
<div class="t nv" style="left:546px;top:134px;transform:scale(0.985,1.13);transform-origin:0 10.3px;">DVD+R</div>
<div class="t" style="left:500px;top:151px;transform:scale(0.996,1.13);transform-origin:0 10.3px;">ID:</div>
<div class="t nv" style="left:546px;top:151px;transform:scale(0.947,1.13);transform-origin:0 10.3px;">MCC 004</div>
<div class="t" style="left:500px;top:169px;transform:scale(0.959,1.13);transform-origin:0 10.3px;">Datum:</div>
<div class="t nv" style="left:546px;top:169px;transform:scale(0.976,1.13);transform-origin:0 10.3px;">9 Sep 1999</div>
<div class="t" style="left:500px;top:187px;transform:scale(0.967,1.13);transform-origin:0 10.3px;">Label:</div>
<div class="a grp" style="left:491px;top:216px;width:139px;height:202px;"></div><div class="t gl" style="left:498px;top:212px;transform:scale(0.953,1.13);transform-origin:0 10.3px;">Einstellungen</div>
<div class="a sunk" style="left:500px;top:225px;width:84px;height:21px;"></div><div class="t" style="left:505px;top:229px;transform:scale(0.968,1.13);transform-origin:0 10.3px;">8 X</div>
<div class="a btn" style="left:566px;top:227px;width:16px;height:17px;"><svg class="a" style="left:4px;top:5px" width="7" height="4"><path d="M0 0H7L3.5 4Z" fill="#000"/></svg></div>
<div class="a btn" style="left:592px;top:224px;width:23px;height:23px;"></div>
<svg class="a" style="left:596px;top:227px" width="14" height="16" viewBox="0 0 14 16"><rect x="0.5" y="0.5" width="13" height="15" fill="#fff" stroke="#000"/>
<path d="M3.5 8V4.5H8" stroke="#008000" stroke-width="1.2" fill="none"/><path d="M7.5 2.5L10 4.5L7.5 6.5Z" fill="#008000"/>
<path d="M10.5 8V11.5H6" stroke="#008000" stroke-width="1.2" fill="none"/><path d="M6.5 9.5L4 11.5L6.5 13.5Z" fill="#008000"/></svg>
<div class="t" style="left:502.3px;top:257px;transform:scale(0.950,1.13);transform-origin:0 10.3px;">Start:</div><div class="a sunk" style="left:554px;top:251px;width:60px;height:20px;"></div><div class="t" style="left:557.5px;top:255px;transform:scale(0.976,1.13);transform-origin:0 10.3px;">0000 MB</div>
<div class="t" style="left:502.3px;top:280px;transform:scale(0.973,1.13);transform-origin:0 10.3px;">Ende:</div><div class="a sunk" style="left:554px;top:274px;width:60px;height:20px;"></div><div class="t" style="left:557.5px;top:278px;transform:scale(0.976,1.13);transform-origin:0 10.3px;">4430 MB</div>
<div class="a sunk cb" style="left:502px;top:296px;background:#fff"></div><div class="t" style="left:520px;top:297px;transform:scale(0.976,1.13);transform-origin:0 10.3px;">Schnelles Scannen</div>
<div class="a sunk cb" style="left:502px;top:314px;background:#fff"><svg class="a" style="left:2.5px;top:2.5px" width="7" height="7" viewBox="0 0 7 7"><path d="M0 2v3l2 2l5-5v-3l-5 5z" fill="#000"/></svg></div><div class="t" style="left:520px;top:315px;transform:scale(0.980,1.13);transform-origin:0 10.3px;">C1/PIE anzeigen</div>
<div class="a sunk cb" style="left:502px;top:329px;background:#fff"><svg class="a" style="left:2.5px;top:2.5px" width="7" height="7" viewBox="0 0 7 7"><path d="M0 2v3l2 2l5-5v-3l-5 5z" fill="#000"/></svg></div><div class="t" style="left:520px;top:330px;transform:scale(0.976,1.13);transform-origin:0 10.3px;">C2/PIF anzeigen</div>
<div class="a sunk cb" style="left:502px;top:345px;background:#fff"><svg class="a" style="left:2.5px;top:2.5px" width="7" height="7" viewBox="0 0 7 7"><path d="M0 2v3l2 2l5-5v-3l-5 5z" fill="#000"/></svg></div><div class="t" style="left:520px;top:346px;transform:scale(0.950,1.13);transform-origin:0 10.3px;">Jitter anzeigen</div>
<div class="a sunk cb" style="left:502px;top:361px;background:#fff"><svg class="a" style="left:2.5px;top:2.5px" width="7" height="7" viewBox="0 0 7 7"><path d="M0 2v3l2 2l5-5v-3l-5 5z" fill="#000"/></svg></div><div class="t" style="left:520px;top:362px;transform:scale(0.987,1.13);transform-origin:0 10.3px;">Zeige Lesegeschw.</div>
<div class="a sunk cb" style="left:502px;top:376px;background:#d6d3ce"><svg class="a" style="left:2.5px;top:2.5px" width="7" height="7" viewBox="0 0 7 7"><path d="M0 2v3l2 2l5-5v-3l-5 5z" fill="#848284"/></svg></div><div class="t" style="left:521px;top:378px;transform:scale(0.984,1.13);transform-origin:0 10.3px;color:#fff">Zeige Schreibgeschw.</div><div class="t" style="left:520px;top:377px;transform:scale(0.984,1.13);transform-origin:0 10.3px;color:#848284">Zeige Schreibgeschw.</div>
<div class="a btn" style="left:527px;top:393px;width:99px;height:23px;"></div><div class="t" style="left:527px;top:398px;width:99px;text-align:center;transform:scale(0.945,1.13);transform-origin:50% 10.3px;">Erweitert</div>
<div class="a grp" style="left:491px;top:425px;width:139px;height:26px;"></div>
<div class="t" style="left:503px;top:433px;transform:scale(0.948,1.13);transform-origin:0 10.3px;">Qualitätsindex:</div><div class="t nv" style="left:560px;top:433px;width:60px;text-align:right;transform:scale(0.980,1.13);transform-origin:100% 10.3px;">96</div>
<div class="a grp" style="left:491px;top:457px;width:139px;height:56px;"></div>
<div class="t" style="left:503px;top:467px;transform:scale(0.943,1.13);transform-origin:0 10.3px;">Fortschritt:</div><div class="t nv" style="left:551px;top:467px;width:70px;text-align:right;transform:scale(0.929,1.13);transform-origin:100% 10.3px;">100 %</div>
<div class="t" style="left:503px;top:483px;transform:scale(0.947,1.13);transform-origin:0 10.3px;">Position:</div><div class="t nv" style="left:551px;top:483px;width:70px;text-align:right;transform:scale(0.976,1.13);transform-origin:100% 10.3px;">4429 MB</div>
<div class="t" style="left:503px;top:498px;transform:scale(0.974,1.13);transform-origin:0 10.3px;">Geschwindigkeit:</div><div class="t nv" style="left:551px;top:498px;width:70px;text-align:right;transform:scale(0.974,1.13);transform-origin:100% 10.3px;">8.29 X</div>
<div class="a grp" style="left:14px;top:457px;width:146px;height:57px;"></div>
<div class="a" style="left:24px;top:454px;width:52px;height:9px;background:#d6d3ce"></div><div class="a" style="left:24px;top:454px;width:8px;height:8px;box-sizing:border-box;border:1px solid #000;background:#00ffff"></div><div class="t" style="left:35px;top:452px;transform:scale(0.922,1.13);transform-origin:0 10.3px;">PI Errors</div>
<div class="t" style="left:22px;top:468px;transform:scale(0.981,1.13);transform-origin:0 10.3px;">Durchschnitt</div><div class="t nv" style="left:80px;top:468px;width:70px;text-align:right;transform:scale(0.980,1.13);transform-origin:100% 10.3px;">0.61</div>
<div class="t" style="left:22px;top:483px;transform:scale(0.927,1.13);transform-origin:0 10.3px;">Maximum:</div><div class="t nv" style="left:80px;top:483px;width:70px;text-align:right;transform:scale(1.000,1.13);transform-origin:100% 10.3px;">8</div>
<div class="t" style="left:22px;top:498px;transform:scale(0.938,1.13);transform-origin:0 10.3px;">Gesamt:</div><div class="t nv" style="left:80px;top:498px;width:70px;text-align:right;transform:scale(0.980,1.13);transform-origin:100% 10.3px;">10808</div>
<div class="a grp" style="left:172px;top:457px;width:146px;height:57px;"></div>
<div class="a" style="left:182px;top:454px;width:61px;height:9px;background:#d6d3ce"></div><div class="a" style="left:182px;top:454px;width:8px;height:8px;box-sizing:border-box;border:1px solid #000;background:#ffff00"></div><div class="t" style="left:193px;top:452px;transform:scale(0.932,1.13);transform-origin:0 10.3px;">PI Failures</div>
<div class="t" style="left:181px;top:468px;transform:scale(0.981,1.13);transform-origin:0 10.3px;">Durchschnitt</div><div class="t nv" style="left:240px;top:468px;width:70px;text-align:right;transform:scale(0.980,1.13);transform-origin:100% 10.3px;">0.00</div>
<div class="t" style="left:181px;top:483px;transform:scale(0.927,1.13);transform-origin:0 10.3px;">Maximum:</div><div class="t nv" style="left:240px;top:483px;width:70px;text-align:right;transform:scale(1.000,1.13);transform-origin:100% 10.3px;">7</div>
<div class="t" style="left:181px;top:498px;transform:scale(0.938,1.13);transform-origin:0 10.3px;">Gesamt:</div><div class="t nv" style="left:240px;top:498px;width:70px;text-align:right;transform:scale(0.980,1.13);transform-origin:100% 10.3px;">433</div>
<div class="a grp" style="left:331px;top:457px;width:148px;height:43px;"></div>
<div class="a" style="left:341px;top:454px;width:34px;height:9px;background:#d6d3ce"></div><div class="a" style="left:341px;top:454px;width:8px;height:8px;box-sizing:border-box;border:1px solid #000;background:#ff00ff"></div><div class="t" style="left:351.5px;top:452px;transform:scale(0.923,1.13);transform-origin:0 10.3px;">Jitter</div>
<div class="t" style="left:340px;top:468px;transform:scale(0.981,1.13);transform-origin:0 10.3px;">Durchschnitt</div><div class="t nv" style="left:398px;top:468px;width:70px;text-align:right;transform:scale(0.933,1.13);transform-origin:100% 10.3px;">7.28 %</div>
<div class="t" style="left:340px;top:483px;transform:scale(0.927,1.13);transform-origin:0 10.3px;">Maximum:</div><div class="t nv" style="left:398px;top:483px;width:70px;text-align:right;transform:scale(0.923,1.13);transform-origin:100% 10.3px;">8.4 %</div>
<div class="t" style="left:340px;top:502px;transform:scale(0.957,1.13);transform-origin:0 10.3px;">PO Ausfälle:</div><div class="t nv" style="left:398px;top:502px;width:70px;text-align:right;transform:scale(1.000,1.13);transform-origin:100% 10.3px;">0</div>
</div>
</body></html>
